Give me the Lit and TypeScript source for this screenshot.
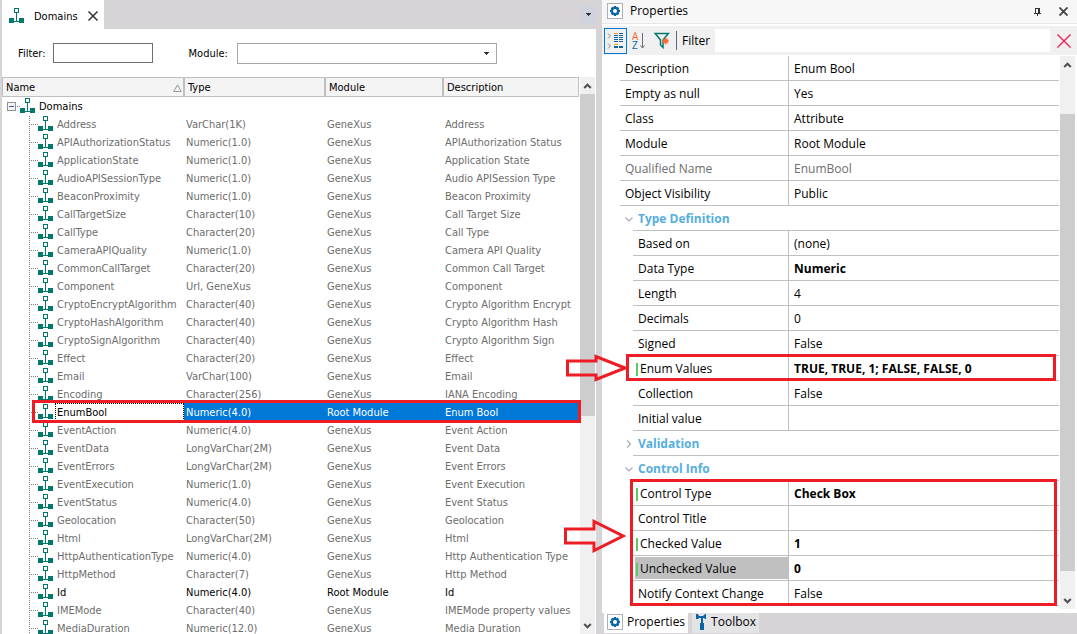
import { LitElement, html, css, svg, nothing } from "lit";
import { customElement, property } from "lit/decorators.js";
import { classMap } from "lit/directives/class-map.js";
import { styleMap } from "lit/directives/style-map.js";

interface Domain {
  name: string;
  type: string;
  module: string;
  description: string;
}

interface Prop {
  name: string;
  value: string;
  bold?: boolean;
  modified?: boolean;
  readonly?: boolean;
  selected?: boolean;
  callout?: boolean;
}

const gx = (name: string, type: string, description = name): Domain => ({
  name,
  type,
  module: "GeneXus",
  description,
});

const DOMAINS: Domain[] = [
  gx("Address", "VarChar(1K)"),
  gx("APIAuthorizationStatus", "Numeric(1.0)", "APIAuthorization Status"),
  gx("ApplicationState", "Numeric(1.0)", "Application State"),
  gx("AudioAPISessionType", "Numeric(1.0)", "Audio APISession Type"),
  gx("BeaconProximity", "Numeric(1.0)", "Beacon Proximity"),
  gx("CallTargetSize", "Character(10)", "Call Target Size"),
  gx("CallType", "Character(20)", "Call Type"),
  gx("CameraAPIQuality", "Numeric(1.0)", "Camera API Quality"),
  gx("CommonCallTarget", "Character(20)", "Common Call Target"),
  gx("Component", "Url, GeneXus"),
  gx("CryptoEncryptAlgorithm", "Character(40)", "Crypto Algorithm Encrypt"),
  gx("CryptoHashAlgorithm", "Character(40)", "Crypto Algorithm Hash"),
  gx("CryptoSignAlgorithm", "Character(40)", "Crypto Algorithm Sign"),
  gx("Effect", "Character(20)"),
  gx("Email", "VarChar(100)"),
  gx("Encoding", "Character(256)", "IANA Encoding"),
  { name: "EnumBool", type: "Numeric(4.0)", module: "Root Module", description: "Enum Bool" },
  gx("EventAction", "Numeric(4.0)", "Event Action"),
  gx("EventData", "LongVarChar(2M)", "Event Data"),
  gx("EventErrors", "LongVarChar(2M)", "Event Errors"),
  gx("EventExecution", "Numeric(1.0)", "Event Execution"),
  gx("EventStatus", "Numeric(4.0)", "Event Status"),
  gx("Geolocation", "Character(50)"),
  gx("Html", "LongVarChar(2M)"),
  gx("HttpAuthenticationType", "Numeric(4.0)", "Http Authentication Type"),
  gx("HttpMethod", "Character(7)", "Http Method"),
  { name: "Id", type: "Numeric(4.0)", module: "Root Module", description: "Id" },
  gx("IMEMode", "Character(40)", "IMEMode property values"),
  gx("MediaDuration", "Numeric(12.0)", "Media Duration"),
];

const GENERAL: Prop[] = [
  { name: "Description", value: "Enum Bool" },
  { name: "Empty as null", value: "Yes" },
  { name: "Class", value: "Attribute" },
  { name: "Module", value: "Root Module" },
  { name: "Qualified Name", value: "EnumBool", readonly: true },
  { name: "Object Visibility", value: "Public" },
];

const TYPE_DEFINITION: Prop[] = [
  { name: "Based on", value: "(none)" },
  { name: "Data Type", value: "Numeric", bold: true },
  { name: "Length", value: "4" },
  { name: "Decimals", value: "0" },
  { name: "Signed", value: "False" },
  { name: "Enum Values", value: "TRUE, TRUE, 1; FALSE, FALSE, 0", bold: true, modified: true, callout: true },
  { name: "Collection", value: "False" },
  { name: "Initial value", value: "" },
];

const CONTROL_INFO: Prop[] = [
  { name: "Control Type", value: "Check Box", bold: true, modified: true },
  { name: "Control Title", value: "" },
  { name: "Checked Value", value: "1", bold: true, modified: true },
  { name: "Unchecked Value", value: "0", bold: true, modified: true, selected: true },
  { name: "Notify Context Change", value: "False" },
];

const base = css`
  * {
    box-sizing: border-box;
  }
  button,
  input,
  select {
    font: inherit;
    color: inherit;
    margin: 0;
    padding: 0;
    border: 0;
    background: none;
    border-radius: 0;
    outline: none;
  }
  svg {
    display: block;
    flex: none;
  }
`;

const domainIcon = svg`<svg class="domain" width="15" height="15" viewBox="0 0 15 15" shape-rendering="crispEdges" aria-hidden="true">
  <rect x="5.5" y="0.5" width="4" height="4" fill="#fff" stroke="#00796b"></rect>
  <path d="M7 5h1v8h-1zM4 13h7v1h-7z" fill="#00796b"></path>
  <path d="M0 10h5v5h-5zM10 10h5v5h-5z" fill="#00796b"></path>
</svg>`;

const gearIcon = svg`<svg width="16" height="16" viewBox="0 0 16 16" aria-hidden="true">
  <rect x="0.5" y="0.5" width="15" height="15" fill="#fff" stroke="#a9b0b8"></rect>
  <path d="M7 3h2l.4 1.3 1.2-.6 1.6 1.6-.6 1.2 1.4.5v2l-1.4.5.6 1.2-1.6 1.6-1.2-.6-.4 1.3h-2l-.4-1.3-1.2.6-1.6-1.6.6-1.2-1.4-.5v-2l1.4-.5-.6-1.2 1.6-1.6 1.2.6z" fill="#0b65a3"></path>
  <circle cx="8" cy="8" r="2" fill="#fff"></circle>
</svg>`;

@customElement("scroll-rail")
export class ScrollRail extends LitElement {
  @property({ type: Number }) before = 0;
  @property({ type: Number }) thumb = 1;
  @property({ type: Number }) after = 1;

  static styles = [
    base,
    css`
      :host {
        display: flex;
        flex-direction: column;
        width: 15px;
        background: #f0f0f0;
      }
      .step {
        display: flex;
        align-items: center;
        justify-content: center;
        height: 17px;
        flex: none;
      }
      .thumb {
        background: #cdcdcd;
      }
      .part {
        flex-basis: 0;
      }
    `,
  ];

  render() {
    return html`
      <button class="step" aria-label="Scroll up">
        <svg width="9" height="6" viewBox="0 0 9 6">
          <path d="M1.2 5l3.3-3.3L7.8 5" fill="none" stroke="#505050" stroke-width="2"></path>
        </svg>
      </button>
      <div class="part" style=${styleMap({ flexGrow: String(this.before) })}></div>
      <div class="part thumb" style=${styleMap({ flexGrow: String(this.thumb) })}></div>
      <div class="part" style=${styleMap({ flexGrow: String(this.after) })}></div>
      <button class="step" aria-label="Scroll down">
        <svg width="9" height="6" viewBox="0 0 9 6">
          <path d="M1.2 1l3.3 3.3L7.8 1" fill="none" stroke="#505050" stroke-width="2"></path>
        </svg>
      </button>
    `;
  }
}

@customElement("domain-list")
export class DomainList extends LitElement {
  static styles = [
    base,
    css`
      :host {
        display: flex;
        flex-direction: column;
        min-width: 0;
        min-height: 0;
        padding-left: 2px;
        background: #d6d4d7;
        color: #000;
        font: 11px/16px "DejaVu Sans Condensed", "Noto Sans", sans-serif;
      }
      .tabs {
        display: flex;
        justify-content: space-between;
        align-items: center;
        height: 29px;
        flex: none;
      }
      .tab {
        display: flex;
        align-items: center;
        gap: 10px;
        height: 29px;
        padding: 2px 6px 0 7px;
        background: #fff;
      }
      .tab .name {
        padding-top: 2px;
      }
      .tab .close {
        display: flex;
      }
      .more {
        display: flex;
        align-items: center;
        justify-content: center;
        width: 16px;
        height: 17px;
        background: #cfd3dd;
      }
      .filters {
        display: flex;
        align-items: center;
        height: 48px;
        flex: none;
        padding: 0 16px;
        background: #fff;
      }
      .filters label {
        padding-top: 2px;
      }
      .filters input {
        width: 100px;
        height: 20px;
        margin: 0 36px 0 7px;
        padding: 0 4px;
        border: 1px solid #6f6f6f;
      }
      .select {
        display: grid;
        align-items: center;
        width: 260px;
        margin-left: 9px;
      }
      .select > * {
        grid-area: 1 / 1;
      }
      .select select {
        appearance: none;
        height: 21px;
        padding: 0 20px 0 4px;
        border: 1px solid #a6a8ad;
      }
      .select svg {
        justify-self: end;
        margin-right: 8px;
        pointer-events: none;
      }
      .body {
        display: flex;
        flex: 1;
        min-height: 0;
        overflow: hidden;
        background: #fff;
        padding-right: 1px;
      }
      .grid {
        flex: 1;
        min-width: 0;
        margin-right: 1px;
      }
      table {
        width: 100%;
        table-layout: fixed;
        border-collapse: separate;
        border-spacing: 0;
      }
      .c-name {
        width: 182px;
      }
      .c-type {
        width: 141px;
      }
      .c-module {
        width: 118px;
      }
      th,
      td {
        padding: 2px 0 0 2px;
        font-weight: normal;
        text-align: left;
        white-space: nowrap;
      }
      thead th {
        height: 20px;
        padding: 2px 1px 0 3px;
        border: 1px solid #bfbfbf;
        background: #f4f4f4;
      }
      .sort {
        display: flex;
        justify-content: space-between;
        align-items: center;
      }
      tbody tr {
        height: 18px;
        color: #6d6d6d;
      }
      tbody th,
      tbody td {
        height: 18px;
      }
      tbody th {
        padding: 0;
      }
      tbody tr.own {
        color: #000;
      }
      .root {
        display: flex;
        align-items: center;
        height: 18px;
        padding-left: 5px;
        color: #000;
      }
      .toggle {
        display: flex;
      }
      .link {
        width: 4px;
        height: 1px;
        background: repeating-linear-gradient(to right, transparent 0 1px, #808080 1px 2px);
      }
      .root .label {
        padding: 2px 0 0 4px;
      }
      .root .domain,
      .node .domain {
        align-self: flex-start;
        margin-top: 1px;
      }
      .node {
        display: flex;
        align-items: center;
        height: 18px;
        padding-left: 27px;
      }
      .branch {
        align-self: stretch;
        display: flex;
        align-items: center;
        width: 9px;
        background: repeating-linear-gradient(to bottom, transparent 0 1px, #808080 1px 2px) left / 1px 100% no-repeat;
      }
      .branch::before {
        content: "";
        flex: 1;
        height: 1px;
        background: repeating-linear-gradient(to right, #808080 0 1px, transparent 1px 2px);
      }
      .node .label {
        flex: 1;
        height: 18px;
        margin-left: 2px;
        padding: 2px 0 0 2px;
      }
      .selected {
        position: relative;
      }
      .selected td {
        background: #0078d7;
        color: #fff;
      }
      .node .current {
        border: 1px dotted #000;
        padding: 1px 0 0 1px;
      }
      .mark {
        position: absolute;
        inset: -3px -2px -2px 30px;
        border: 3px solid #ee1c24;
        pointer-events: none;
      }
      scroll-rail {
        flex: none;
      }
    `,
  ];

  private caret = svg`<svg width="5" height="3" viewBox="0 0 5 3" shape-rendering="crispEdges"><path d="M0 0h5v1H4v1H3v1H2V2H1V1H0z" fill="#303030"></path></svg>`;

  private row(d: Domain) {
    const selected = d.name === "EnumBool";
    return html`<tr class=${classMap({ own: d.module === "Root Module", selected })}>
      <th scope="row">
        <div class="node">
          <span class="branch"></span>${domainIcon}<span class=${classMap({ label: true, current: selected })}>${d.name}</span>
        </div>
      </th>
      <td>${d.type}</td>
      <td>${d.module}</td>
      <td>${d.description}${selected ? html`<span class="mark"></span>` : nothing}</td>
    </tr>`;
  }

  render() {
    return html`
      <div class="tabs">
        <div class="tab">
          ${domainIcon}<span class="name">Domains</span>
          <button class="close" aria-label="Close Domains">
            <svg width="10" height="10" viewBox="0 0 10 10">
              <path d="M.5.5l9 9M9.5.5l-9 9" stroke="#333" stroke-width="1.5"></path>
            </svg>
          </button>
        </div>
        <button class="more" aria-label="Open documents">${this.caret}</button>
      </div>
      <div class="filters">
        <label for="filter">Filter:</label>
        <input id="filter" type="text" />
        <label for="module">Module:</label>
        <span class="select">
          <select id="module"><option></option></select>
          ${this.caret}
        </span>
      </div>
      <div class="body">
        <div class="grid">
          <table>
            <colgroup>
              <col class="c-name" />
              <col class="c-type" />
              <col class="c-module" />
              <col />
            </colgroup>
            <thead>
              <tr>
                <th scope="col">
                  <span class="sort">Name
                    <svg width="9" height="8" viewBox="0 0 9 8">
                      <path d="M4.5.8L8.3 7.5H.7z" fill="none" stroke="#9a9a9a"></path>
                    </svg>
                  </span>
                </th>
                <th scope="col">Type</th>
                <th scope="col">Module</th>
                <th scope="col">Description</th>
              </tr>
            </thead>
            <tbody>
              <tr>
                <th scope="rowgroup" colspan="4">
                  <div class="root">
                    <button class="toggle" aria-label="Collapse Domains">
                      <svg width="9" height="9" viewBox="0 0 9 9" shape-rendering="crispEdges">
                        <rect x=".5" y=".5" width="8" height="8" fill="#f4f4f4" stroke="#919191"></rect>
                        <path d="M2 4h5v1h-5z" fill="#3d5bab"></path>
                      </svg>
                    </button>
                    <span class="link"></span>${domainIcon}<span class="label">Domains</span>
                  </div>
                </th>
              </tr>
              ${DOMAINS.map((d) => this.row(d))}
            </tbody>
          </table>
        </div>
        <scroll-rail .before=${0} .thumb=${322} .after=${201}></scroll-rail>
      </div>
    `;
  }
}

@customElement("property-panel")
export class PropertyPanel extends LitElement {
  static styles = [
    base,
    css`
      :host {
        display: flex;
        flex-direction: column;
        min-width: 0;
        min-height: 0;
        background: #fff;
        color: #000;
        font: 12px/18px "Open Sans", "Noto Sans", sans-serif;
      }
      .title {
        display: flex;
        align-items: center;
        gap: 7px;
        height: 24px;
        flex: none;
        padding: 0 8px 2px 5px;
        background: #f7f7f7;
        border-bottom: 1px solid #e6e6e6;
      }
      .title button {
        display: flex;
        margin: 2px 1px 0 0;
      }
      .title .pin {
        margin-left: auto;
        margin-right: 11px;
      }
      .tools {
        display: flex;
        align-items: center;
        height: 29px;
        flex: none;
        margin-top: 2px;
        padding: 0 6px 0 2px;
        background: #f0f0f0;
      }
      .tools button {
        display: flex;
        align-items: center;
        justify-content: center;
        width: 23px;
        height: 26px;
      }
      .tools .on {
        border: 1px solid #0078d7;
      }
      .tools label {
        margin-left: 5px;
      }
      .rule {
        width: 1px;
        height: 19px;
        margin-left: 3px;
        background: #62627c;
      }
      .tools input {
        flex: 1;
        min-width: 0;
        height: 23px;
        margin: 0 7px 0 5px;
        padding: 0 4px;
        background: #fff;
      }
      .tools .clear {
        width: 14px;
      }
      .tools svg {
        overflow: visible;
      }
      .a {
        font-size: 10px;
        fill: #f26430;
      }
      .z {
        font-size: 10px;
        fill: #0b65a3;
      }
      .content {
        display: flex;
        flex: 1;
        min-height: 0;
        padding: 1px 2px 4px 18px;
      }
      .list {
        flex: 1;
        min-width: 0;
        margin-right: 1px;
      }
      table {
        width: 100%;
        table-layout: fixed;
        border-collapse: separate;
        border-spacing: 0;
      }
      .c-gutter {
        width: 13px;
      }
      .c-name {
        width: 155px;
      }
      th,
      td {
        height: 25px;
        padding: 0 0 0 5px;
        font-weight: normal;
        text-align: left;
        white-space: nowrap;
        border-bottom: 1px solid #c0c0c0;
      }
      .gutter {
        padding: 0;
        border: 0;
      }
      td.value {
        padding-top: 2px;
        border-left: 1px solid #c0c0c0;
      }
      .bold {
        font-weight: bold;
      }
      .readonly {
        color: #6d6d6d;
      }
      .group {
        padding-top: 2px;
        color: #55aee0;
        font-weight: bold;
      }
      .gutter button {
        display: flex;
        margin-left: 5px;
      }
      th.modified {
        padding-left: 2px;
      }
      .cell {
        display: flex;
        align-items: center;
        height: 22px;
        padding-top: 2px;
      }
      .modified .cell::before {
        content: "";
        width: 2px;
        height: 13px;
        margin: 0 2px 0 1px;
        background: #5fc95f;
      }
      .selected .cell {
        background: #c0c0c0;
      }
      .boxed {
        position: relative;
      }
      .mark {
        position: absolute;
        border: 3px solid #ee1c24;
        pointer-events: none;
      }
      .mark.one {
        inset: -2px 3px 0 6px;
      }
      .mark.many {
        inset: -2px 2px 0 10px;
      }
      .arrow {
        position: absolute;
        right: 100%;
        top: 50%;
        transform: translateY(-50%);
        margin-right: 1px;
      }
      .many .arrow {
        top: 45%;
        margin-right: 7px;
      }
      .tabs {
        display: flex;
        height: 21px;
        flex: none;
        padding-left: 2px;
        gap: 4px;
        background: #d6d4d7;
      }
      .tab {
        display: flex;
        align-items: center;
        gap: 4px;
        height: 20px;
        padding: 0 3px 2px;
        background: #e4e4e6;
      }
      .tab.active {
        background: #fff;
      }
    `,
  ];

  private arrow(h: number) {
    const m = h / 2;
    return html`<svg class="arrow" width="62" height=${h} viewBox="0 0 62 ${h}">
      <path
        d="M1.5 ${m - 7}H30V2.5L59 ${m}L30 ${h - 2.5}V${m + 7}H1.5z"
        fill="none"
        stroke="#ee1c24"
        stroke-width="3"
      ></path>
    </svg>`;
  }

  private row(p: Prop, nested: boolean, mark: unknown = nothing) {
    return html`<tr class=${classMap({ readonly: !!p.readonly, boxed: !!p.callout, selected: !!p.selected })}>
      ${nested ? html`<td class="gutter"></td>` : nothing}
      <th scope="row" colspan=${nested ? 1 : 2} class=${classMap({ modified: !!p.modified })}>
        <div class="cell">${p.name}</div>
      </th>
      <td class=${classMap({ value: true, bold: !!p.bold })}>
        ${p.value}${p.callout ? html`<span class="mark one">${this.arrow(28)}</span>` : mark}
      </td>
    </tr>`;
  }

  private group(name: string, open: boolean) {
    return html`<tr>
      <td class="gutter">
        <button aria-label="Toggle ${name}" aria-expanded=${open ? "true" : "false"}>
          <svg width="8" height="8" viewBox="0 0 8 8">
            <path d=${open ? "M.5 2.5L4 6L7.5 2.5" : "M2 .5L5.5 4L2 7.5"} fill="none" stroke="#a3adb8" stroke-width="1.2"></path>
          </svg>
        </button>
      </td>
      <th class="group" scope="rowgroup" colspan="2">${name}</th>
    </tr>`;
  }

  render() {
    return html`
      <div class="title">
        ${gearIcon}<span>Properties</span>
        <button class="pin" aria-label="Auto hide">
          <svg width="7" height="8" viewBox="0 0 7 8" shape-rendering="crispEdges">
            <path d="M1 0h5v5h1v1H4v2H3V6H0V5h1zM2 1v4h2V1z" fill="#333" fill-rule="evenodd"></path>
          </svg>
        </button>
        <button aria-label="Close">
          <svg width="9" height="9" viewBox="0 0 9 9">
            <path d="M.5.5l8 8M8.5.5l-8 8" stroke="#444" stroke-width="1.8"></path>
          </svg>
        </button>
      </div>
      <div class="tools">
        <button class="on" aria-label="Categorized">
          <svg width="17" height="18" viewBox="0 0 17 18">
            <path d="M1 1.5l2.5 2.5L1 6.5M1 11.5l2.5 2.5L1 16.5" fill="none" stroke="#8a8a8a"></path>
            <g shape-rendering="crispEdges">
              <path d="M7 1h4v1H7zM7 12h4v1H7z" fill="#f7931e"></path>
              <path
                d="M12 1h4v1h-4zM7 3h4v1H7zM12 3h4v1h-4zM7 5h4v1H7zM12 5h4v1h-4zM7 7h4v1H7zM12 7h4v1h-4zM7 9h4v1H7zM12 9h4v1h-4zM7 14h4v2H7zM12 14h4v2h-4z"
                fill="#0b65a3"
              ></path>
            </g>
          </svg>
        </button>
        <button aria-label="Alphabetical">
          <svg width="13" height="18" viewBox="0 0 13 18">
            <text class="a" x="0" y="8">A</text>
            <text class="z" x="0" y="17">Z</text>
            <path d="M10.5 1v15M8.5 13.5l2 2.5 2-2.5" fill="none" stroke="#6b7078"></path>
          </svg>
        </button>
        <button aria-label="Filter modified">
          <svg width="16" height="17" viewBox="0 0 16 17">
            <path d="M1.2 1.5h13.1L9 8v7.5L6.5 13V8z" fill="none" stroke="#00796b" stroke-width="1.5"></path>
            <path d="M11.5 5.5v7M8 9h7M9 6.5l5 5M14 6.5l-5 5" stroke="#ff6b35"></path>
            <circle cx="11.5" cy="9" r="2.5" fill="#ff6b35"></circle>
          </svg>
        </button>
        <span class="rule"></span>
        <label for="prop-filter">Filter</label>
        <input id="prop-filter" type="text" />
        <button class="clear" aria-label="Clear filter">
          <svg width="14" height="14" viewBox="0 0 14 14">
            <path d="M.5.5l13 13M13.5.5l-13 13" stroke="#e91e5a" stroke-width="1.4"></path>
          </svg>
        </button>
      </div>
      <div class="content">
        <div class="list">
          <table>
            <colgroup>
              <col class="c-gutter" />
              <col class="c-name" />
              <col />
            </colgroup>
            <tbody>
              ${GENERAL.map((p) => this.row(p, false))}
            </tbody>
            <tbody>
              ${this.group("Type Definition", true)} ${TYPE_DEFINITION.map((p) => this.row(p, true))}
            </tbody>
            <tbody>
              ${this.group("Validation", false)}
            </tbody>
            <tbody>
              ${this.group("Control Info", true)}
            </tbody>
            <tbody class="boxed">
              ${CONTROL_INFO.map((p, i) =>
                this.row(p, true, i === 0 ? html`<span class="mark many">${this.arrow(34)}</span>` : nothing)
              )}
            </tbody>
          </table>
        </div>
        <scroll-rail .before=${41} .thumb=${457} .after=${21}></scroll-rail>
      </div>
      <div class="tabs">
        <button class="tab active">${gearIcon}Properties</button>
        <button class="tab">
          <svg width="12" height="16" viewBox="0 0 12 16" aria-hidden="true">
            <path d="M1 0h2l1 2h4l2-2h1v5h-1L9 4H8v5h1v7H5V9h1V4H4L3 5H1z" fill="#0b65a3"></path>
          </svg>
          Toolbox
        </button>
      </div>
    `;
  }
}

@customElement("app-root")
export class AppRoot extends LitElement {
  static styles = css`
    :host {
      display: grid;
      grid-template-columns: 596fr 475fr;
      column-gap: 6px;
      height: 100vh;
      overflow: hidden;
      background: #d6d4d7;
    }
  `;

  render() {
    return html`<domain-list></domain-list><property-panel></property-panel>`;
  }
}
